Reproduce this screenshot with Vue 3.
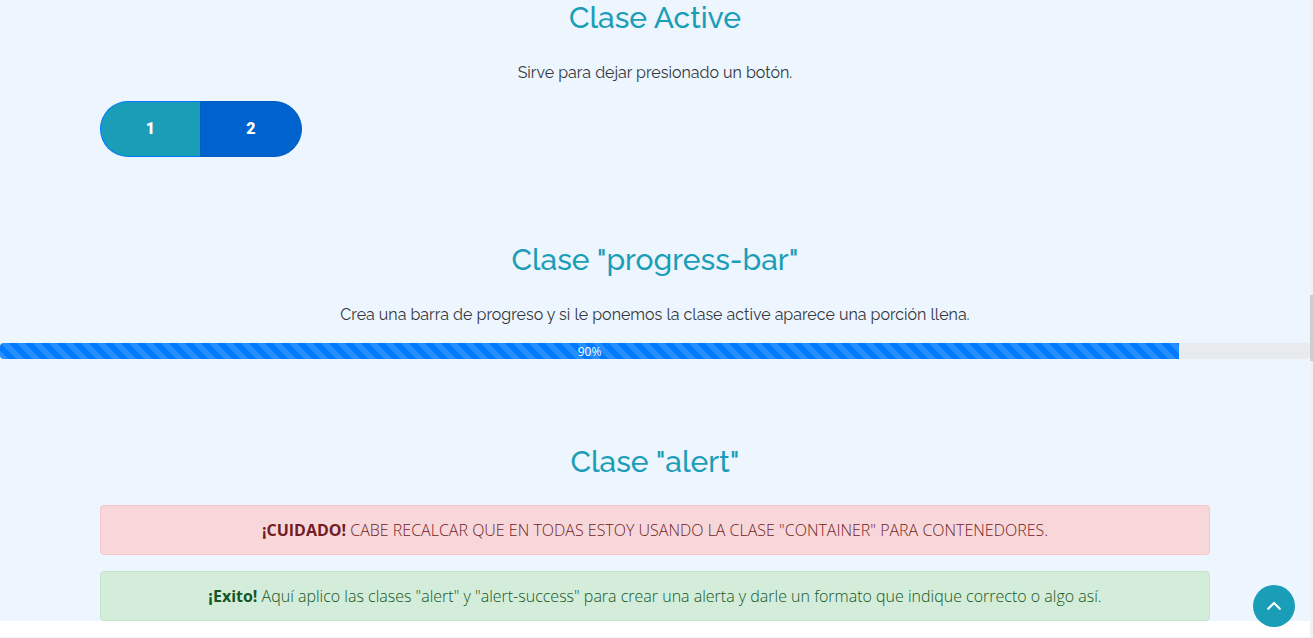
<script setup>
const progress = 90
</script>

<template>
  <main class="page">
    <section class="block">
      <h2>Clase Active</h2>
      <p>Sirve para dejar presionado un botón.</p>
      <div class="container">
        <div class="group">
          <button type="button" class="btn teal">1</button>
          <button type="button" class="btn active" aria-pressed="true">2</button>
        </div>
      </div>
    </section>
    <section class="block">
      <h2>Clase "progress-bar"</h2>
      <p>Crea una barra de progreso y si le ponemos la clase active aparece una porción llena.</p>
      <div class="progress" role="progressbar" aria-label="Progreso" :aria-valuenow="progress" aria-valuemin="0" aria-valuemax="100">
        <div class="bar" :style="{ width: progress + '%' }">{{ progress }}%</div>
      </div>
    </section>
    <section class="block last">
      <h2>Clase "alert"</h2>
      <div class="container alerts">
        <div class="alert danger" role="alert"><strong>¡CUIDADO!</strong> CABE RECALCAR QUE EN TODAS ESTOY USANDO LA CLASE "CONTAINER" PARA CONTENEDORES.</div>
        <div class="alert success" role="alert"><strong>¡Exito!</strong> Aquí aplico las clases "alert" y "alert-success" para crear una alerta y darle un formato que indique correcto o algo así.</div>
      </div>
    </section>
  </main>
  <div class="next"></div>
  <div class="scroll-track"><div class="scroll-thumb"></div></div>
  <a class="to-top" href="#app" aria-label="Volver arriba">
    <svg width="16" height="16" viewBox="0 0 16 16"><path d="M2.2 10.8L8 5l5.800 5.800" fill="none" stroke="#fff" stroke-width="2.2" stroke-linecap="round" stroke-linejoin="round" /></svg>
  </a>
</template>

<style>
body { margin: 0; background: #fff; }
</style>

<style scoped>
* { box-sizing: border-box; }
.page {
  margin-right: 3px;
  background: #edf5ff;
  color: #34383c;
  font: 16px/24px "Open Sans", "Noto Sans", sans-serif;
  text-align: center;
}
h2 { margin: 0 0 25px; color: #1a9eb7; font: 500 30px/36px Raleway, Lato, sans-serif; }
p { margin: 0 0 16px; font: 400 16px/24px Raleway, Lato, sans-serif; }
.block { padding-bottom: 85px; }
.last { padding-bottom: 0; }
.container { width: 1110px; max-width: 100%; margin: 0 auto; text-align: left; }
.group { display: flex; }
.btn { width: 101px; height: 56px; padding: 0; border: 1px solid #007bff; color: #fff; font: 900 16px/24px Roboto, sans-serif; }
.teal { background: #1a9eb7; border-right-color: #005cbf; border-radius: 28px 0 0 28px; }
.active { width: 102px; margin-left: -1px; background: #0062cc; border-color: #005cbf; border-radius: 0 28px 28px 0; }
.progress { height: 16px; background: #e8ebed; border-radius: 4px; overflow: hidden; }
.bar {
  height: 100%;
  background: #007bff linear-gradient(45deg, rgba(255,255,255,.15) 25%, transparent 25%, transparent 50%, rgba(255,255,255,.15) 50%, rgba(255,255,255,.15) 75%, transparent 75%) 0 0 / 16px 16px;
  color: #fff;
  font-size: 12px;
  line-height: 18px;
}
.alerts { display: grid; gap: 16px; text-align: center; }
.alert { padding: 12px 20px; border: 1px solid; border-radius: 4px; font-weight: 300; }
.alert strong { font-weight: 700; }
.danger { color: #721c24; background: #f7d7da; border-color: #f5c6cb; }
.success { color: #155724; background: #d4ecda; border-color: #c3e6cb; }
.next { margin: 16px 3px 0 0; height: 1px; background: #edf5ff; }
.scroll-track { position: fixed; top: 0; right: 0; bottom: 0; width: 3px; padding-top: 295px; background: #f1f1f1; }
.scroll-thumb { height: 66px; background: #cdcdcd; }
.to-top { position: fixed; right: 18px; bottom: 11px; width: 42px; height: 42px; border-radius: 50%; background: #1a9eb7; display: grid; place-items: center; }
</style>
